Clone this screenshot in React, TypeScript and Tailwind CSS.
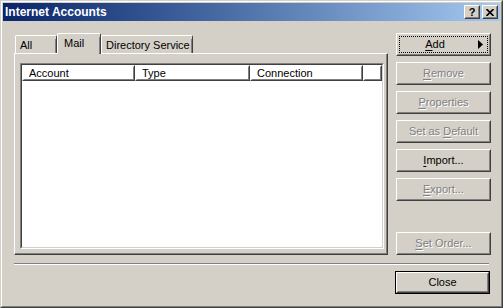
import React from 'react';

const raisedOuter = "border border-t-white border-l-white border-r-[#404040] border-b-[#404040]";
const raisedInner = "border border-t-[#d4d0c8] border-l-[#d4d0c8] border-r-[#808080] border-b-[#808080]";
const disabledText = "text-[#808080] [text-shadow:1px_1px_0_#ffffff]";

function Key({ children }: { children: React.ReactNode }) {
    return <span className="underline underline-offset-[2px] decoration-1">{children}</span>;
}

interface BtnProps {
    children: React.ReactNode;
    disabled?: boolean;
    isDefault?: boolean;
    focused?: boolean;
    menu?: boolean;
    className?: string;
}

function Btn({ children, disabled, isDefault, focused, menu, className = "" }: BtnProps) {
    const body = (
        <div className={`h-full w-full ${raisedOuter}`}>
            <div className={`h-full w-full ${raisedInner} p-[1px]`}>
                <div className={`h-full w-full flex items-center ${focused ? "border border-dotted border-black" : "border border-transparent"}`}>
                    <div className={`flex-1 text-center leading-none whitespace-nowrap ${disabled ? disabledText : "text-black"}`}>
                        {children}
                    </div>
                    {menu && (
                        <svg width="5" height="9" viewBox="0 0 5 9" className="mr-[4px] ml-[8px]">
                            <path d="M0 0 L5 4.5 L0 9 Z" fill="#000" />
                        </svg>
                    )}
                </div>
            </div>
        </div>
    );
    return (
        <div className={`w-[95px] h-[23px] ${isDefault ? "border border-black" : ""} ${className}`}>
            {body}
        </div>
    );
}

function TitleButton({ children }: { children: React.ReactNode }) {
    return (
        <div className={`w-[16px] h-[14px] ${raisedOuter} bg-[#d4d0c8]`}>
            <div className={`h-full w-full ${raisedInner} flex items-center justify-center`}>
                {children}
            </div>
        </div>
    );
}

function Tab({ label, selected, width }: { label: string; selected?: boolean; width: string }) {
    return (
        <div
            className={`${width} ${selected ? "h-[21px] -mb-[1px] relative z-10 pt-[3px]" : "h-[18px] pt-[3px]"} bg-[#d4d0c8] border-l border-t border-l-white border-t-white border-r border-r-[#404040] rounded-tl-[2px] rounded-tr-[2px]`}
        >
            <div className={`h-full border-r border-r-[#808080] ${selected ? "pl-[6px]" : "pl-[4px]"} leading-[12px] text-black whitespace-nowrap`}>
                {label}
            </div>
        </div>
    );
}

function HeaderCell({ label, width }: { label: string; width: string }) {
    return (
        <div className={`${width} h-[16px] ${raisedOuter}`}>
            <div className={`h-full ${raisedInner} border-t-white border-l-white pl-[5px] leading-[12px] text-black whitespace-nowrap`}>
                {label}
            </div>
        </div>
    );
}

export default function App() {
    return (
        <div className="w-[503px] h-[308px] bg-[#d4d0c8] border border-t-[#d4d0c8] border-l-[#d4d0c8] border-r-[#404040] border-b-[#404040] font-['Liberation_Sans',Arial,sans-serif] text-[11px] select-none">
            <div className="h-full border border-t-white border-l-white border-r-[#808080] border-b-[#808080] p-px flex flex-col">
                {/* title bar */}
                <div className="h-[18px] flex items-center bg-gradient-to-r from-[#0a246a] to-[#a6caf0] pl-[2px] pr-[2px]">
                    <div className="flex-1 text-white font-bold text-[12px] leading-none">Internet Accounts</div>
                    <div className="flex gap-[2px]">
                        <TitleButton>
                            <span className="font-bold text-[11px] leading-none text-black">?</span>
                        </TitleButton>
                        <TitleButton>
                            <svg width="8" height="7" viewBox="0 0 8 7">
                                <path d="M0.5 0 L7.5 7 M7.5 0 L0.5 7" stroke="#000" strokeWidth="1.6" />
                            </svg>
                        </TitleButton>
                    </div>
                </div>

                {/* body */}
                <div className="flex-1 flex flex-col pl-[11px] pt-[12px]">
                    <div className="flex h-[222px]">
                        <div className="w-[374px] flex flex-col">
                            <div className="h-[20px] flex items-end pl-px">
                                <Tab label="All" width="w-[42px]" />
                                <Tab label="Mail" width="w-[44px]" selected />
                                <Tab label="Directory Service" width="w-[92px]" />
                            </div>
                            <div className="h-[202px] border border-t-white border-l-white border-r-[#404040] border-b-[#404040]">
                                <div className="h-full border-r border-b border-r-[#808080] border-b-[#808080] pl-[5px] pt-[9px]">
                                    <div className="w-[364px] h-[186px] border border-t-[#808080] border-l-[#808080] border-r-white border-b-white">
                                        <div className="h-full border border-t-[#404040] border-l-[#404040] border-r-[#d4d0c8] border-b-[#d4d0c8] bg-white">
                                            <div className="flex">
                                                <HeaderCell label="Account" width="w-[113px]" />
                                                <HeaderCell label="Type" width="w-[115px]" />
                                                <HeaderCell label="Connection" width="w-[113px]" />
                                                <HeaderCell label="" width="flex-1" />
                                            </div>
                                        </div>
                                    </div>
                                </div>
                            </div>
                        </div>

                        <div className="ml-[8px] flex flex-col gap-[6px]">
                            <Btn focused menu>
                                <Key>A</Key>dd
                            </Btn>
                            <Btn disabled>
                                <Key>R</Key>emove
                            </Btn>
                            <Btn disabled>
                                <Key>P</Key>roperties
                            </Btn>
                            <Btn disabled>
                                Set as <Key>D</Key>efault
                            </Btn>
                            <Btn>
                                <Key>I</Key>mport...
                            </Btn>
                            <Btn disabled>
                                <Key>E</Key>xport...
                            </Btn>
                            <Btn disabled className="mt-auto">
                                <Key>S</Key>et Order...
                            </Btn>
                        </div>
                    </div>

                    <div className="w-[475px] mt-[8px] border-t border-b border-t-[#808080] border-b-white" />

                    <div className="mt-[6px] flex">
                        <Btn isDefault className="ml-[381px]">Close</Btn>
                    </div>
                </div>
            </div>
        </div>
    );
}
